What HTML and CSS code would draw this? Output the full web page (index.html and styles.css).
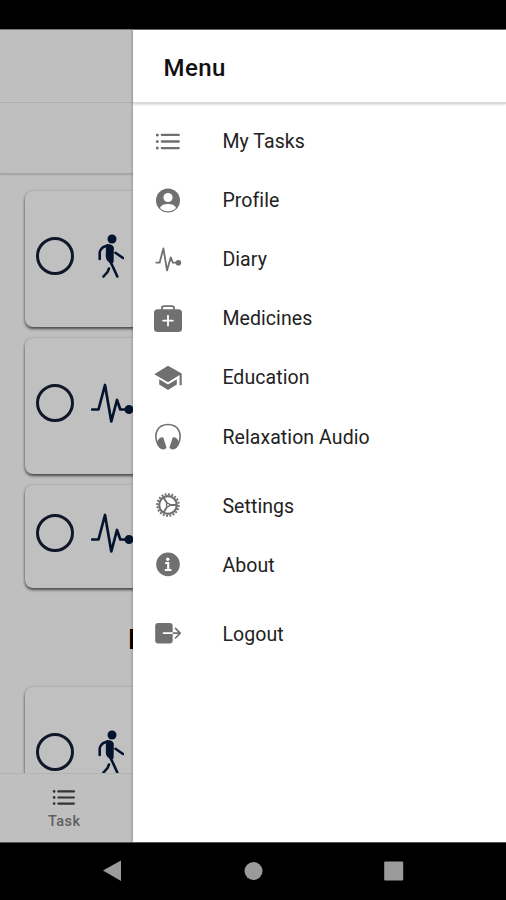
FILE: index.html
```html
<!DOCTYPE html>
<html lang="en">
<head>
<meta charset="utf-8">
<title>Menu</title>
<link rel="stylesheet" href="styles.css">
</head>
<body>
<svg class="defs" aria-hidden="true">
  <symbol id="list" viewBox="0 0 26 20">
    <g fill="none" stroke="currentColor" stroke-linecap="round"><path stroke-width="2.3" d="M6.8 3.4H23.8M6.8 10H23.8M6.8 16.6H23.8"/><path stroke-width="3" d="M2.3 3.4h.01M2.3 10h.01M2.3 16.6h.01"/></g>
  </symbol>
  <symbol id="pulse" viewBox="0 0 44 42">
    <path fill="none" stroke="currentColor" stroke-width="2.7" stroke-linecap="round" stroke-linejoin="round" d="M1.2 27.5H7.5L14 3 20.3 39.5 26 18 29.3 27.5H36"/><circle cx="38" cy="27.5" r="4.5" fill="currentColor"/>
  </symbol>
  <symbol id="walk" viewBox="0 0 28 46">
    <circle cx="16" cy="6" r="4.5" fill="currentColor"/>
    <path fill="currentColor" d="M10 12.5Q13 10.3 16.5 12.4Q18.4 13.5 17.8 17L17.6 29L15.6 31.5L11 27.5Q9.4 25 9.8 21Z"/>
    <path fill="none" stroke="currentColor" stroke-width="2.6" stroke-linecap="round" stroke-linejoin="round" d="M3.7 26V20.5Q3.8 16.5 7 14.2L12 12.3M19.5 19.8L27 25M14.5 29L17 34 21.3 43.5M13 35.5L11.5 39 7.5 43.5"/>
  </symbol>
</svg>
<div class="status"></div>
<div class="app">
  <main class="page">
    <div class="titlebar"></div>
    <div class="datebar"></div>
    <div class="tasks">
      <div class="card"><span class="check"></span><svg class="walk"><use href="#walk"/></svg></div>
      <div class="card"><span class="check"></span><svg class="pulse"><use href="#pulse"/></svg></div>
      <div class="card short"><span class="check"></span><svg class="pulse"><use href="#pulse"/></svg></div>
      <h2 class="section">I</h2>
      <div class="card"><span class="check"></span><svg class="walk"><use href="#walk"/></svg></div>
    </div>
    <div class="tabbar"><svg class="tabicon"><use href="#list"/></svg><span>Task</span></div>
  </main>
  <aside class="drawer">
    <h1 class="title">Menu</h1>
    <nav>
      <ul class="group">
        <li><svg viewBox="0 0 28 28"><use href="#list" x="1" y="3.5" width="26" height="20"/></svg>My Tasks</li>
        <li><svg viewBox="0 0 28 28"><circle cx="14" cy="13.5" r="12" fill="currentColor"/><circle cx="14" cy="10.5" r="4.6" fill="#fff"/><path fill="#fff" d="M6 20.9C7.4 17.8 10.5 17.1 14 17.1S20.6 17.8 22 20.9Q18.8 24.3 14 24.3T6 20.9Z"/></svg>Profile</li>
        <li><svg viewBox="0 0 28 28"><path fill="none" stroke="currentColor" stroke-width="1.8" stroke-linecap="round" stroke-linejoin="round" d="M2.3 16.7H5.6L9.4 2.4 13 24.4 16.8 11.3 18.8 16.7H24"/><circle cx="24.4" cy="16.7" r="2.8" fill="currentColor"/></svg>Diary</li>
        <li><svg viewBox="0 0 28 28"><rect y="4.2" width="28" height="22.8" rx="3.5" fill="currentColor"/><path fill="none" stroke="currentColor" stroke-width="1.8" d="M8 5V2.8Q8 1.1 9.8 1.1H18.2Q20 1.1 20 2.8V5"/><path stroke="#fff" stroke-width="1.8" stroke-linecap="round" d="M14 10.7V20.5M9.1 15.6H18.9"/></svg>Medicines</li>
        <li><svg viewBox="0 0 28 28"><path fill="currentColor" d="M14 1.8L27.7 9.6V21.2H25.6V11.1L14 18.2 .3 10.2ZM5.2 15.2L14 20.4 22.8 15.2V20.6L14 26 5.2 20.6Z"/></svg>Education</li>
        <li><svg viewBox="0 0 28 28"><path fill="none" stroke="currentColor" stroke-width="1.6" d="M4.2 22C-1.5 10.5 4 1.5 14 1.5S29.5 10.5 23.8 22"/><path fill="currentColor" d="M3.9 17.3Q6.3 13 9.3 14.6L12.6 24.7Q10.8 27 8 26.2 4 25 3.3 21ZM24.1 17.3Q21.7 13 18.7 14.6L15.4 24.7Q17.2 27 20 26.2 24 25 24.7 21Z"/></svg>Relaxation Audio</li>
      </ul>
      <ul class="group">
        <li><svg viewBox="0 0 28 28"><g fill="none" stroke="currentColor"><circle cx="14" cy="13" r="8.8" stroke-width="2.2"/><circle cx="14" cy="13" r="10.8" stroke-width="2" pathLength="40" stroke-dasharray="1.15 .85"/><circle cx="14" cy="13" r="1.6" stroke-width="1.4"/><path stroke-width="1.9" d="M15.5 13H23M13.2 11.5L9.6 5.5M13.2 14.5L9.6 20.5"/></g></svg>Settings</li>
        <li><svg viewBox="0 0 28 28"><circle cx="14" cy="13.4" r="11.8" fill="currentColor"/><circle cx="13.7" cy="8.3" r="1.7" fill="#fff"/><path fill="none" stroke="#fff" stroke-width="2.2" d="M11.2 12H14.2V18.8M10.8 19H17.4"/></svg>About</li>
      </ul>
      <ul class="group">
        <li><svg viewBox="0 0 28 28"><rect x="1.2" y="3" width="17.5" height="20.5" rx="3" fill="currentColor"/><path fill="none" stroke="#fff" stroke-width="1.7" stroke-linecap="round" d="M9.5 13.2H18.7"/><path fill="none" stroke="currentColor" stroke-width="1.7" stroke-linecap="round" stroke-linejoin="round" d="M19.5 13.2H26M21.5 8.4L26.2 13.2 21.5 18"/></svg>Logout</li>
      </ul>
    </nav>
  </aside>
</div>
<div class="sysnav">
  <svg viewBox="0 0 20 22"><path fill="#9b9b9b" d="M1 10.5L19 .5V21Z"/></svg>
  <svg viewBox="0 0 20 22"><circle cx="10.5" cy="11" r="9" fill="#9b9b9b"/></svg>
  <svg viewBox="0 0 20 22"><rect x=".2" y="1.5" width="19" height="19" rx="1" fill="#9b9b9b"/></svg>
</div>
</body>
</html>
```
FILE: styles.css
```css
* { box-sizing: border-box; }
body {
  margin: 0;
  height: 900px;
  display: flex;
  flex-direction: column;
  overflow: hidden;
  background: #000;
  font-family: Roboto, sans-serif;
}
.defs { display: none; }
.status { height: 29px; flex: none; }
.app {
  flex: 1;
  min-height: 0;
  display: flex;
  border-top: 1px solid #777;
}
.page {
  width: 133.4px;
  flex: none;
  display: flex;
  flex-direction: column;
  overflow: hidden;
  background: #bfbfbf;
}
.titlebar { height: 73px; flex: none; border-bottom: 1px solid #b0b0b0; }
.datebar {
  height: 71px;
  flex: none;
  border-bottom: 1px solid #a2a2a2;
  box-shadow: 0 1px 2px rgba(0, 0, 0, .15);
}
.tasks {
  flex: 1;
  min-height: 0;
  overflow: hidden;
  padding: 17px 0 0 25px;
}
.card {
  width: 456px;
  height: 136px;
  margin-bottom: 11px;
  padding: 0 0 7px 11px;
  display: flex;
  align-items: center;
  border-radius: 8px;
  background: #c0c0c0;
  box-shadow: 0 2px 3px rgba(0, 0, 0, .6), 0 0 3px rgba(0, 0, 0, .15);
  color: #04132e;
}
.card.short { height: 103px; }
.check {
  width: 38px;
  height: 38px;
  flex: none;
  border: 3px solid #101729;
  border-radius: 50%;
}
.walk { width: 28px; height: 46px; margin-left: 22px; }
.pulse { width: 44px; height: 42px; margin-left: 17px; }
.section {
  margin: 0 0 0 103px;
  height: 88px;
  padding-top: 25px;
  font-size: 27px;
  line-height: 32px;
  font-weight: 700;
  color: #000;
}
.tabbar {
  height: 69px;
  flex: none;
  padding: 14px 5px 0 0;
  display: flex;
  flex-direction: column;
  align-items: center;
  gap: 6px;
  border-top: 1px solid #b3b3b3;
  font-size: 14.5px;
  line-height: 18px;
  font-weight: 500;
  letter-spacing: .4px;
  color: #606060;
}
.tabicon { width: 24px; height: 19px; color: #333; }
.drawer {
  flex: 1;
  background: #fff;
  box-shadow: 0 0 3px rgba(0, 0, 0, .35);
}
.title {
  margin: 0;
  height: 74px;
  padding-left: 30px;
  border-bottom: 2px solid #dadada;
  box-shadow: 0 1px 2px rgba(0, 0, 0, .12);
  font-size: 24px;
  line-height: 76px;
  font-weight: 500;
  letter-spacing: .5px;
  color: #111;
}
nav { padding-top: 8px; }
.group { list-style: none; margin: 0 0 10px; padding: 0; }
.group li {
  height: 59.1px;
  padding-left: 21px;
  display: flex;
  align-items: center;
  gap: 40px;
  font-size: 19.5px;
  letter-spacing: .08px;
  color: #222;
}
.group svg { width: 28px; height: 28px; flex: none; color: #707070; }
.sysnav {
  height: 58px;
  flex: none;
  padding: 0 102px 2px;
  display: flex;
  align-items: center;
  justify-content: space-between;
  border-top: 1px solid #555;
}
.sysnav svg { width: 20px; height: 22px; }
```
